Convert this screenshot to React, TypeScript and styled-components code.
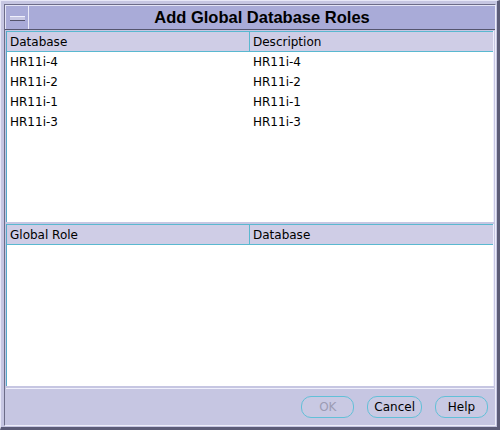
import React from 'react';
import styled, { createGlobalStyle } from 'styled-components';

const GlobalStyle = createGlobalStyle`
  html, body {
    margin: 0;
    padding: 0;
    background: #c4c4e2;
  }
  body {
    font-family: "DejaVu Sans", "Liberation Sans", sans-serif;
  }
`;

const Frame = styled.div`
  width: 500px;
  height: 430px;
  box-sizing: border-box;
  background: #c6c6e2;
  border-top: 1px solid #e8e8f8;
  border-left: 1px solid #e8e8f8;
  border-right: 3px solid #5c5c78;
  border-bottom: 3px solid #5c5c78;
  padding: 3px 1px 1px 3px;
  display: flex;
  flex-direction: column;
`;

const Inner = styled.div`
  flex: 1;
  display: flex;
  flex-direction: column;
  border-top: 1px solid #6c6c88;
  border-left: 1px solid #6c6c88;
  border-right: 1px solid #eeeefa;
  border-bottom: 1px solid #eeeefa;
`;

const TitleBar = styled.div`
  height: 24px;
  display: flex;
  background: #a9abd8;
  border-bottom: 1px solid #55556e;
`;

const MenuButton = styled.div`
  width: 24px;
  height: 24px;
  box-sizing: border-box;
  border-top: 1px solid #e4e4f6;
  border-left: 1px solid #e4e4f6;
  border-right: 1px solid #eaeaf8;
  display: flex;
  align-items: center;
  justify-content: center;
`;

const MenuBar = styled.div`
  width: 15px;
  height: 3px;
  margin-top: 2px;
  background: #c8c8e4;
  border-top: 1px solid #f0f0fc;
  border-bottom: 1px solid #54546c;
`;

const Title = styled.div`
  flex: 1;
  display: flex;
  align-items: center;
  justify-content: center;
  font-family: "Liberation Sans", Arial, sans-serif;
  font-size: 16.5px;
  font-weight: bold;
  color: #000;
  border-top: 1px solid #e4e4f6;
`;

const Body = styled.div`
  flex: 1;
  display: flex;
  flex-direction: column;
  padding: 1px 1px 0 1px;
`;

const Table = styled.div<{ $h: number }>`
  height: ${(p) => p.$h}px;
  background: #fff;
  display: flex;
  flex-direction: column;
  border-left: 1px solid #55a8c8;
  border-right: 1px solid #eef;
`;

const HeaderRow = styled.div`
  height: 19px;
  display: grid;
  grid-template-columns: 243px 1fr;
  background: #cfcde6;
  border-top: 1px solid #5ab8d0;
  border-bottom: 1px solid #5ab8d0;
`;

const HeaderCell = styled.div<{ $divider?: boolean }>`
  display: flex;
  align-items: center;
  padding-left: 3px;
  font-size: 12px;
  color: #000;
  border-right: ${(p) => (p.$divider ? '1px solid #5ab8d0' : 'none')};
`;

const Row = styled.div`
  height: 20px;
  display: grid;
  grid-template-columns: 243px 1fr;
  align-items: center;
`;

const Cell = styled.div`
  padding-left: 3px;
  font-size: 12px;
  color: #000;
`;

const Spacer = styled.div`
  height: 2px;
`;

const ButtonBar = styled.div`
  flex: 1;
  display: flex;
  justify-content: flex-end;
  align-items: center;
  gap: 13px;
  padding-right: 6px;
  border-top: 1px solid #f0f0fc;
  margin-top: 2px;
`;

const PillButton = styled.button<{ $disabled?: boolean }>`
  height: 22px;
  min-width: 53px;
  padding: 0 6px;
  border: 1px solid #62c0d8;
  border-radius: 10px;
  background: #c9c9e3;
  font-family: "DejaVu Sans", "Liberation Sans", sans-serif;
  font-size: 12px;
  color: ${(p) => (p.$disabled ? '#9c9cb4' : '#000')};
`;

const topRows = ['HR11i-4', 'HR11i-2', 'HR11i-1', 'HR11i-3'];

export default function App() {
  return (
    <>
      <GlobalStyle />
      <Frame>
        <Inner>
          <TitleBar>
            <MenuButton>
              <MenuBar />
            </MenuButton>
            <Title>Add Global Database Roles</Title>
          </TitleBar>
          <Body>
            <Table $h={191}>
              <HeaderRow>
                <HeaderCell $divider>Database</HeaderCell>
                <HeaderCell>Description</HeaderCell>
              </HeaderRow>
              {topRows.map((r) => (
                <Row key={r}>
                  <Cell>{r}</Cell>
                  <Cell>{r}</Cell>
                </Row>
              ))}
            </Table>
            <Spacer />
            <Table $h={162}>
              <HeaderRow>
                <HeaderCell $divider>Global Role</HeaderCell>
                <HeaderCell>Database</HeaderCell>
              </HeaderRow>
            </Table>
            <ButtonBar>
              <PillButton $disabled>OK</PillButton>
              <PillButton>Cancel</PillButton>
              <PillButton>Help</PillButton>
            </ButtonBar>
          </Body>
        </Inner>
      </Frame>
    </>
  );
}
